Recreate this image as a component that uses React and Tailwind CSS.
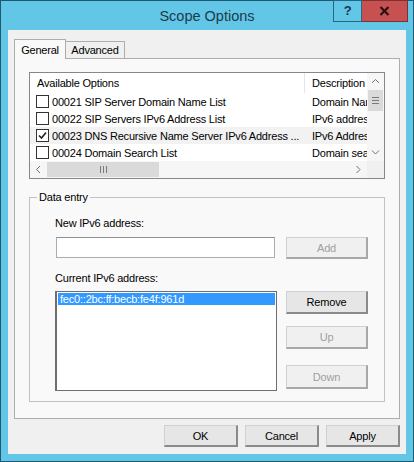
import React from 'react';

const Check = ({ checked }) => (
  <span className="w-[13px] h-[13px] border border-[#333] bg-white flex items-center justify-center shrink-0">
    {checked && (
      <svg width="9" height="9" viewBox="0 0 9 9">
        <path d="M1 4.5 L3.5 7 L8 1.5" stroke="#222" strokeWidth="1.6" fill="none" />
      </svg>
    )}
  </span>
);

const Arrow = ({ dir }) => {
  const paths = {
    up: 'M1 5 L4.5 1.5 L8 5',
    down: 'M1 1.5 L4.5 5 L8 1.5',
    left: 'M5 1 L1.5 4.5 L5 8',
    right: 'M1.5 1 L5 4.5 L1.5 8',
  };
  const vertical = dir === 'up' || dir === 'down';
  return (
    <svg width={vertical ? 9 : 7} height={vertical ? 7 : 9} viewBox={vertical ? '0 0 9 7' : '0 0 7 9'}>
      <path d={paths[dir]} stroke="#707070" strokeWidth="1" fill="none" />
    </svg>
  );
};

const Btn = ({ children, disabled, className = '' }) => (
  <div
    className={
      'h-[22px] flex items-center justify-center border-t border-l border-t-[#d0d0d0] border-l-[#d0d0d0] border-r-2 border-b-2 ' +
      (disabled
        ? 'border-r-[#a8a8a8] border-b-[#a8a8a8] bg-[#f0f0f0] text-[#a0a0a0] '
        : 'border-r-[#8a8a8a] border-b-[#8a8a8a] bg-[#e6e6e6] text-black ') +
      className
    }
  >
    {children}
  </div>
);

const options = [
  { checked: false, name: '00021 SIP Server Domain Name List', desc: 'Domain Name List' },
  { checked: false, name: '00022 SIP Servers IPv6 Address List', desc: 'IPv6 address list' },
  { checked: true, name: '00023 DNS Recursive Name Server IPv6 Address ...', desc: 'IPv6 Address list', hl: true },
  { checked: false, name: '00024 Domain Search List', desc: 'Domain search list' },
];

export default function App() {
  return (
    <div className="w-[414px] h-[462px] bg-[#62c6e7] border border-[#1f5873] flex flex-col font-['Liberation_Sans',Arial,sans-serif] text-[11px] tracking-[-0.2px] text-black leading-[14px]">
      {/* Title bar */}
      <div className="relative h-[29px] flex items-center justify-center">
        <span className="text-[14.5px] text-[#1d3a4c] tracking-normal mt-[1px]">Scope Options</span>
        <div className="absolute top-[-1px] right-[5px] flex">
          <div className="w-[29px] h-[22px] border border-[#2b6584] flex items-center justify-center text-[13px] font-bold text-[#1a3650]">
            ?
          </div>
          <div className="w-[46px] h-[22px] bg-[#c75050] border border-[#7c3232] border-l-0 flex items-center justify-center">
            <svg width="11" height="10" viewBox="0 0 11 10">
              <path d="M1.5 1 L9.5 9 M9.5 1 L1.5 9" stroke="#2a1010" strokeWidth="2.2" />
            </svg>
          </div>
        </div>
      </div>

      {/* Client area */}
      <div className="mx-[7px] h-[424px] bg-[#f0f0f0] flex flex-col">
        {/* Tabs */}
        <div className="pt-[9px] pl-[6px] flex items-end h-[28px]">
          <div className="relative z-10 -mb-px h-[20px] w-[52px] border border-b-0 border-[#adadad] bg-[#f9f9f9] flex items-center justify-center">
            General
          </div>
          <div className="h-[17px] w-[59px] border border-l-0 border-b-0 border-[#adadad] bg-[#f0f0f0] flex items-center justify-center">
            Advanced
          </div>
        </div>

        {/* Tab panel */}
        <div className="mx-[6px] h-[361px] border border-[#adadad] bg-[#f9f9f9] flex flex-col">
          {/* List view */}
          <div className="mt-[13px] ml-[14px] w-[356px] h-[107px] border border-[#828790] bg-white flex flex-col">
            <div className="flex h-[88px]">
              <div className="w-[337px] flex flex-col">
                <div className="h-[20px] flex">
                  <div className="w-[275px] border-r border-[#e5e5e5] pl-[7px] flex items-center">Available Options</div>
                  <div className="w-[62px] pl-[7px] flex items-center overflow-hidden whitespace-nowrap">Description</div>
                </div>
                {options.map((o) => (
                  <div key={o.name} className={'h-[17px] flex ' + (o.hl ? 'bg-[#f2f2f2]' : '')}>
                    <div className="w-[275px] pl-[6px] flex items-center gap-[3px] whitespace-nowrap overflow-hidden">
                      <Check checked={o.checked} />
                      <span>{o.name}</span>
                    </div>
                    <div className="w-[62px] pl-[7px] flex items-center whitespace-nowrap overflow-hidden">{o.desc}</div>
                  </div>
                ))}
              </div>
              {/* Vertical scrollbar */}
              <div className="w-[17px] bg-[#f6f6f6] flex flex-col">
                <div className="h-[17px] flex items-center justify-center">
                  <Arrow dir="up" />
                </div>
                <div className="h-[21px] mx-[1px] bg-[#dadada] flex flex-col items-center justify-center gap-[2px]">
                  <span className="w-[7px] h-px bg-[#7a7a7a]" />
                  <span className="w-[7px] h-px bg-[#7a7a7a]" />
                  <span className="w-[7px] h-px bg-[#7a7a7a]" />
                </div>
                <div className="flex-1" />
                <div className="h-[17px] flex items-center justify-center">
                  <Arrow dir="down" />
                </div>
              </div>
            </div>
            {/* Horizontal scrollbar */}
            <div className="h-[17px] flex">
              <div className="w-[337px] bg-[#f6f6f6] flex">
                <div className="w-[17px] flex items-center justify-center">
                  <Arrow dir="left" />
                </div>
                <div className="w-[112px] my-[1px] bg-[#dadada] flex items-center justify-center gap-[2px]">
                  <span className="w-px h-[7px] bg-[#7a7a7a]" />
                  <span className="w-px h-[7px] bg-[#7a7a7a]" />
                  <span className="w-px h-[7px] bg-[#7a7a7a]" />
                </div>
                <div className="flex-1" />
                <div className="w-[17px] flex items-center justify-center">
                  <Arrow dir="right" />
                </div>
              </div>
              <div className="w-[17px] bg-[#f0f0f0]" />
            </div>
          </div>

          {/* Data entry group */}
          <div className="relative mt-[18px] ml-[14px] w-[356px] h-[205px] border border-[#c2c2c2] pl-[25px] pt-[18px]">
            <span className="absolute top-[-8px] left-[7px] px-[2px] bg-[#f9f9f9]">Data entry</span>
            <div>New IPv6 address:</div>
            <div className="mt-[7px] flex items-start">
              <div className="ml-[1px] w-[219px] h-[21px] border border-[#abadb3] border-t-[#8e8f8f] bg-white" />
              <Btn disabled className="ml-[11px] w-[82px]">Add</Btn>
            </div>
            <div className="mt-[12px]">Current IPv6 address:</div>
            <div className="mt-[6px] flex items-start">
              <div className="w-[222px] h-[100px] border-l-2 border-t border-r border-b border-[#6e6e6e] bg-white p-[1px]">
                <div className="h-[12px] bg-[#3399ff] text-white flex items-center pl-[2px] leading-[12px]">
                  fec0::2bc:ff:becb:fe4f:961d
                </div>
              </div>
              <div className="ml-[9px] flex flex-col">
                <Btn className="w-[82px] h-[23px]">Remove</Btn>
                <Btn disabled className="mt-[12px] w-[82px] h-[23px]">Up</Btn>
                <Btn disabled className="mt-[16px] w-[82px] h-[24px]">Down</Btn>
              </div>
            </div>
          </div>
        </div>

        {/* Dialog buttons */}
        <div className="mt-[6px] pr-[6px] flex justify-end gap-[7px]">
          <Btn className="w-[74px] bg-[#e1e1e1]">OK</Btn>
          <Btn className="w-[74px]">Cancel</Btn>
          <Btn className="w-[74px]">Apply</Btn>
        </div>
      </div>
    </div>
  );
}
